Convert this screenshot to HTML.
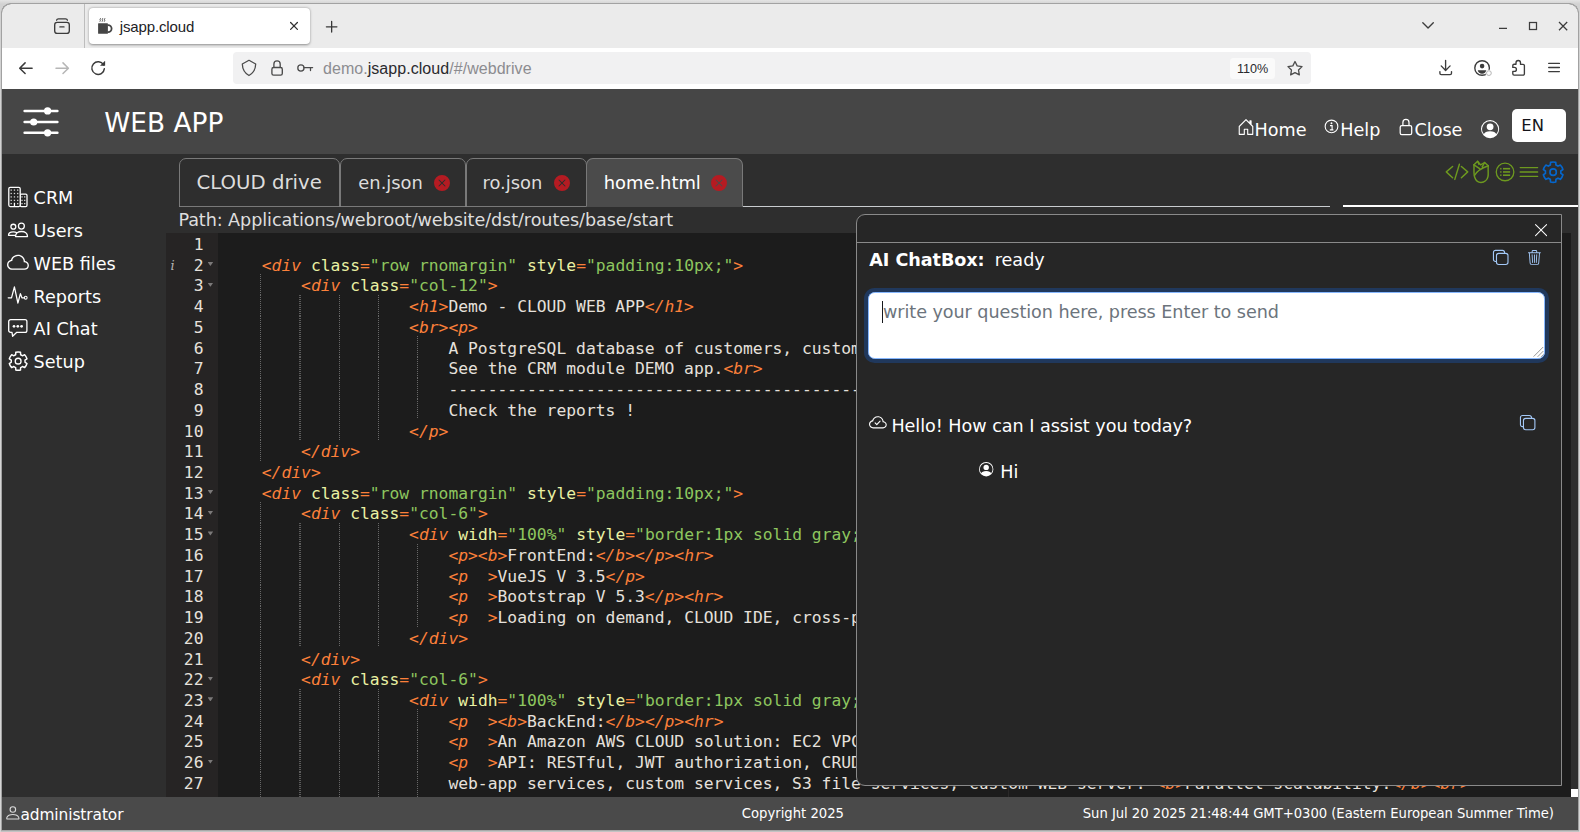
<!DOCTYPE html>
<html lang="en">
<head>
<meta charset="utf-8">
<title>jsapp.cloud</title>
<style>
*{box-sizing:border-box;margin:0;padding:0}
html,body{width:1580px;height:832px;overflow:hidden}
body{background:linear-gradient(180deg,#e4e4e4 0,#d2d2d2 4px,#d6d6d6 100%);font-family:"DejaVu Sans","Liberation Sans",sans-serif;position:relative}
.abs{position:absolute}
svg{display:block;overflow:visible}
#win{position:absolute;left:1px;top:3px;width:1578px;height:827px;border:1px solid #a2a2a2;border-bottom:0;border-radius:10px 10px 0 0;overflow:hidden;background:#2e2e2e}
/* everything inside #win is positioned in page coordinates via #pg wrapper */
#pg{position:absolute;left:-2px;top:-4px;width:1580px;height:832px}
/* ---------- browser chrome ---------- */
#titlebar{left:2px;top:4px;width:1576px;height:44px;background:#ebebeb}
#navbar{left:2px;top:48px;width:1576px;height:40.7px;background:#fff}
#tab{left:89px;top:8px;width:221px;height:35.5px;background:#fff;border-radius:4px;box-shadow:0 .5px 2.5px rgba(0,0,0,.4)}
.chrome-t{font-family:"DejaVu Sans","Liberation Sans",sans-serif;color:#15141a;white-space:pre}
#urlbar{left:233px;top:52px;width:1077.8px;height:31.8px;background:#f1f1f2;border-radius:4px}
/* ---------- app ---------- */
#hdr{left:2px;top:88.7px;width:1576px;height:65.2px;background:#464646}
#ftr{left:2px;top:797px;width:1576px;height:33px;background:#4a4a4a}
.t{position:absolute;white-space:pre;color:#fff;line-height:1}
.side{font-size:17.6px;color:#fff}
/* tabs */
.tb{position:absolute;top:158px;height:48.5px;border:1px solid #797979;border-radius:7px 7px 0 0;background:#2e2e2e}
.tb.act{background:#4b4b4b;border-bottom-color:#4b4b4b}
.tbt{font-size:19.8px;color:#dcdcdc}
/* editor */
#ed{left:166px;top:233px;width:1405px;height:564px;background:#1c1c1c;overflow:hidden}
#gut{left:0;top:0;width:52px;height:564px;background:#262424}
.ln,.cl{position:absolute;left:0;height:20.73px;line-height:20.73px;font-family:"DejaVu Sans Mono","Liberation Mono",monospace;font-size:16.32px;white-space:pre}
.ln{width:37.5px;text-align:right;color:#e6e1dc}
.cl{left:56.5px;color:#e6e1dc}
.cl i{color:#fc803a;font-style:italic}
.cl u{color:#fc803a;text-decoration:none}
.cl b{color:#eaf1a3;font-weight:normal}
.cl s{color:#8ec65f;text-decoration:none}
.fold{position:absolute;left:41.6px;width:5.6px;height:4.1px;background:#7b7979;clip-path:polygon(0 0,100% 0,50% 100%)}
.g{position:absolute;width:1px;background-image:linear-gradient(#686868 50%,transparent 50%);background-size:1px 2px}
.g2{width:2px;background-image:linear-gradient(#5c5c5c 50%,transparent 50%)}
/* chat panel */
#chat{left:856px;top:214px;width:706px;height:572px;background:#262626;border:1px solid #8a8a8a;border-radius:9px 0 0 9px}
</style>
</head>
<body>
<div class="abs" style="left:1px;top:830px;width:1578px;height:2px;background:linear-gradient(#9c9c9c,#d0d0d0)"></div>
<div id="win"><div id="pg">
<div class="abs" id="titlebar"></div>
<div class="abs" id="navbar"></div>
<div class="abs" style="left:84px;top:4px;width:1px;height:44px;background:#bdbdbd"></div>
<div class="abs" id="tab"></div>
<div class="t" style="left:119.70px;top:18px;font-size:15px;line-height:17px;color:#222226;font-family:'Liberation Sans',sans-serif;letter-spacing:-0.12px;">jsapp.cloud</div>
<div class="abs" id="urlbar"></div>
<div class="abs" style="left:1229.6px;top:57.7px;width:45.9px;height:21.4px;background:#fafafa;border-radius:3.5px"></div>
<div class="t" style="left:1237.00px;top:62px;font-size:12.6px;line-height:14px;color:#2a2a2e;font-family:'Liberation Sans',sans-serif;">110%</div>
<div class="t" style="left:323.00px;top:60px;font-size:16px;line-height:17px;color:#8c8c90;font-family:'Liberation Sans',sans-serif;letter-spacing:0.05px;"><span style="color:#8c8c90">demo.</span><span style="color:#2a2a2e">jsapp.cloud</span><span style="color:#8c8c90">/#/webdrive</span></div>
<svg class="abs" style="left:0;top:0" width="1580" height="90" viewBox="0 0 1580 90"><g fill="none" stroke="#3c3c3c" stroke-width="1.35" stroke-linecap="round" stroke-linejoin="round"><rect x="54.7" y="22.4" width="14.6" height="10.9" rx="2.4"/><path d="M56.6 20.2 q0.3 -1.3 1.8 -1.3 h7.2 q1.5 0 1.8 1.3"/><path d="M59.9 26.9 h4.1"/></g><g><rect x="98.1" y="23.2" width="9.8" height="10.6" rx="0.6" fill="#454545"/><path d="M107.6 25.1 h0.5 a3.5 3.5 0 0 1 0 7 h-0.5" fill="none" stroke="#454545" stroke-width="1.8"/><path d="M100.7 18.2 q-1.2 1 -0.5 1.8 q0.6 0.8 -0.4 1.7 M102.9 18.2 q-1.2 1 -0.5 1.8 q0.6 0.8 -0.4 1.7 M105.1 18.2 q-1.2 1 -0.5 1.8 q0.6 0.8 -0.4 1.7" stroke="#5c5c5c" stroke-width="1" fill="none"/></g><path d="M290.6 22.55 l6.8 6.8 M297.4 22.55 l-6.8 6.8" stroke="#333" stroke-width="1.3" stroke-linecap="round" fill="none"/><path d="M326.4 26.8 h10.5 M331.65 21.5 v10.6" stroke="#383838" stroke-width="1.3" stroke-linecap="round" fill="none"/><path d="M1422.8 22.8 l5.25 5.3 l5.25 -5.3" stroke="#3c3c3c" stroke-width="1.35" stroke-linecap="round" stroke-linejoin="round" fill="none"/><path d="M1499 28.4 h8" stroke="#3c3c3c" stroke-width="1.25" fill="none"/><rect x="1529.5" y="22.5" width="7" height="7" stroke="#3c3c3c" stroke-width="1.25" fill="none"/><path d="M1559 22 l8.2 8.2 M1567.2 22 l-8.2 8.2" stroke="#3c3c3c" stroke-width="1.25" fill="none"/><path d="M32.1 68.2 H19.8 M25.1 62.9 L19.7 68.2 L25.1 73.5" stroke="#3a3a3a" stroke-width="1.5" stroke-linecap="round" stroke-linejoin="round" fill="none"/><path d="M56 68.2 H68.3 M63 62.9 L68.4 68.2 L63 73.5" stroke="#b6b6b6" stroke-width="1.5" stroke-linecap="round" stroke-linejoin="round" fill="none"/><path d="M104.38 68.65 A6.3 6.3 0 1 1 103.56 64.95" stroke="#3a3a3a" stroke-width="1.45" stroke-linecap="round" fill="none"/><path d="M105.1 60.7 V65.8 H100 Z" fill="#3a3a3a"/><path d="M249 60.3 L255.7 64 C255.5 70 253.2 73.2 249 75.5 C244.8 73.2 242.5 70 242.3 64 Z" stroke="#4c4c4c" stroke-width="1.3" stroke-linejoin="round" fill="none"/><rect x="271.9" y="67.5" width="10.4" height="7.6" rx="1.7" stroke="#4c4c4c" stroke-width="1.35" fill="none"/><path d="M273.9 67.4 V64 a3.15 3.15 0 0 1 6.3 0 V67.4" stroke="#4c4c4c" stroke-width="1.35" fill="none"/><circle cx="300.9" cy="68" r="3.1" stroke="#4c4c4c" stroke-width="1.3" fill="none"/><path d="M304 67.6 H312.6 M310.5 67.6 V70.6" stroke="#4c4c4c" stroke-width="1.3" stroke-linecap="round" fill="none"/><polygon points="1295.00,61.50 1297.17,65.91 1302.04,66.61 1298.52,70.04 1299.35,74.89 1295.00,72.60 1290.65,74.89 1291.48,70.04 1287.96,66.61 1292.83,65.91" stroke="#4c4c4c" stroke-width="1.3" stroke-linejoin="round" fill="none"/><path d="M1445.6 60.3 V70.4 M1441.2 65.9 L1445.6 70.5 L1450.1 65.9 M1439.9 71.6 V73.2 a1.4 1.4 0 0 0 1.4 1.4 H1450.1 a1.4 1.4 0 0 0 1.4 -1.4 V71.6" stroke="#3c3c3c" stroke-width="1.35" stroke-linecap="round" stroke-linejoin="round" fill="none"/><circle cx="1482.1" cy="68" r="7.3" stroke="#3c3c3c" stroke-width="1.4" fill="none"/><circle cx="1482.1" cy="66.1" r="2.3" fill="#3c3c3c"/><path d="M1477.7 70.3 H1486.5 C1486 72.6 1484.3 73.8 1482.1 73.8 C1479.9 73.8 1478.2 72.6 1477.7 70.3 Z" fill="#3c3c3c"/><circle cx="1488.9" cy="73.1" r="3.4" fill="#fff"/><circle cx="1488.9" cy="73.1" r="2.4" fill="#fff" stroke="#b4b4b4" stroke-width="1"/><path d="M1512.8 65.6 a1.3 1.3 0 0 1 1.3 -1.3 H1516 V62.7 a2.25 2.25 0 0 1 4.5 0 V64.3 H1523.1 a1.3 1.3 0 0 1 1.3 1.3 V73.8 a1.3 1.3 0 0 1 -1.3 1.3 H1514.1 a1.3 1.3 0 0 1 -1.3 -1.3 V71.4 H1514.4 a2 2 0 0 0 0 -4 H1512.8 Z" stroke="#3c3c3c" stroke-width="1.35" stroke-linejoin="round" fill="none"/><path d="M1548.7 63.4 H1559.4 M1548.7 67.5 H1559.4 M1548.7 71.6 H1559.4" stroke="#3c3c3c" stroke-width="1.3" stroke-linecap="round" fill="none"/></svg>
<div class="abs" id="hdr"></div>
<svg class="abs" style="left:20px;top:104px" width="44" height="36" viewBox="20 104 44 36"><g stroke="#fff" stroke-width="2.5" stroke-linecap="round"><path d="M24.6 110.9 H57.4 M24.6 122 H57.4 M24.6 132.8 H57.4"/></g><circle cx="47.6" cy="110.9" r="3.6" fill="#fff"/><circle cx="33.7" cy="122" r="3.6" fill="#fff"/><circle cx="47.6" cy="132.8" r="3.6" fill="#fff"/></svg>
<div class="t" style="left:104.20px;top:108px;font-size:26.4px;line-height:30px;color:#fff;">WEB APP</div>
<svg class="abs" style="left:1237.45px;top:117.70px" width="18.00" height="18.00" viewBox="0 0 16 16" preserveAspectRatio="none" fill="#fff"><path d="M8.354 1.146a.5.5 0 0 0-.708 0l-6 6A.5.5 0 0 0 1.5 7.5v7a.5.5 0 0 0 .5.5h4.5a.5.5 0 0 0 .5-.5v-4h2v4a.5.5 0 0 0 .5.5H14a.5.5 0 0 0 .5-.5v-7a.5.5 0 0 0-.146-.354L13 5.793V2.5a.5.5 0 0 0-.5-.5h-1a.5.5 0 0 0-.5.5v1.293zM2.5 14V7.707l5.5-5.5 5.5 5.5V14H10v-4a.5.5 0 0 0-.5-.5h-3a.5.5 0 0 0-.5.5v4z"/></svg>
<div class="t" style="left:1254.60px;top:120px;font-size:17.6px;line-height:20px;color:#fff;">Home</div>
<svg class="abs" style="left:1322px;top:117px" width="20" height="20" viewBox="1322 117 20 20"><circle cx="1331.5" cy="126.45" r="6.35" fill="none" stroke="#fff" stroke-width="1.1"/><circle cx="1331.5" cy="123.3" r="0.95" fill="#fff"/><path d="M1330 125.6 H1332.1 V129.8 M1329.8 129.9 H1333.4" fill="none" stroke="#fff" stroke-width="1.15"/></svg>
<div class="t" style="left:1340.30px;top:120px;font-size:17.6px;line-height:20px;color:#fff;">Help</div>
<svg class="abs" style="left:1396px;top:116px" width="20" height="22" viewBox="1396 116 20 22"><rect x="1400.2" y="125.6" width="11.5" height="8.9" rx="1.6" fill="none" stroke="#fff" stroke-width="1.25"/><path d="M1402.9 125.6 V122.4 a3.05 3.05 0 0 1 6.1 0 V125.6" fill="none" stroke="#fff" stroke-width="1.25"/></svg>
<div class="t" style="left:1414.50px;top:120px;font-size:17.6px;line-height:20px;color:#fff;">Close</div>
<svg class="abs" style="left:1480.90px;top:119.90px" width="18.20" height="18.20" viewBox="0 0 16 16" preserveAspectRatio="none" fill="#fff"><path d="M11 6a3 3 0 1 1-6 0 3 3 0 0 1 6 0"/><path fill-rule="evenodd" d="M0 8a8 8 0 1 1 16 0A8 8 0 0 1 0 8m8-7a7 7 0 0 0-5.468 11.370C3.242 11.226 4.805 10 8 10s4.757 1.225 5.468 2.370A7 7 0 0 0 8 1"/></svg>
<div class="abs" style="left:1511.8px;top:108.8px;width:54.3px;height:33.2px;background:#fff;border-radius:5px"></div>
<div class="t" style="left:1521.30px;top:116px;font-size:16.4px;line-height:19px;color:#15141a;">EN</div>
<div class="t" style="left:33.60px;top:188px;font-size:17.6px;line-height:20px;color:#fff;">CRM</div>
<div class="t" style="left:33.60px;top:221px;font-size:17.6px;line-height:20px;color:#fff;">Users</div>
<div class="t" style="left:33.60px;top:254px;font-size:17.6px;line-height:20px;color:#fff;">WEB files</div>
<div class="t" style="left:33.60px;top:287px;font-size:17.6px;line-height:20px;color:#fff;">Reports</div>
<div class="t" style="left:33.60px;top:319px;font-size:17.6px;line-height:20px;color:#fff;">AI Chat</div>
<div class="t" style="left:33.60px;top:352px;font-size:17.6px;line-height:20px;color:#fff;">Setup</div>
<svg class="abs" style="left:4px;top:182px" width="30" height="30" viewBox="4 182 30 30"><rect x="20.2" y="194.2" width="6.8" height="12.4" rx="1.3" fill="#222" stroke="#fff" stroke-width="1.3"/><rect x="8.8" y="187.3" width="11.4" height="19.3" rx="1.5" fill="#222" stroke="#fff" stroke-width="1.3"/><g fill="#d8d8d8"><rect x="10.55" y="189.45" width="1.3" height="1.3"/><rect x="10.55" y="192.85" width="1.3" height="1.3"/><rect x="10.55" y="196.25" width="1.3" height="1.3"/><rect x="10.55" y="199.75" width="1.3" height="1.3"/><rect x="10.55" y="202.95" width="1.3" height="1.3"/><rect x="13.80" y="189.45" width="1.3" height="1.3"/><rect x="13.80" y="192.85" width="1.3" height="1.3"/><rect x="13.80" y="196.25" width="1.3" height="1.3"/><rect x="13.80" y="199.75" width="1.3" height="1.3"/><rect x="17.05" y="189.45" width="1.3" height="1.3"/><rect x="17.05" y="192.85" width="1.3" height="1.3"/><rect x="17.05" y="196.25" width="1.3" height="1.3"/><rect x="17.05" y="199.75" width="1.3" height="1.3"/><rect x="17.05" y="202.95" width="1.3" height="1.3"/><rect x="21.35" y="196.25" width="1.3" height="1.3"/><rect x="21.35" y="199.75" width="1.3" height="1.3"/><rect x="21.35" y="202.95" width="1.3" height="1.3"/><rect x="24.05" y="196.25" width="1.3" height="1.3"/><rect x="24.05" y="199.75" width="1.3" height="1.3"/><rect x="24.05" y="202.95" width="1.3" height="1.3"/></g><path d="M14.45 202.8 V206.6" stroke="#fff" stroke-width="1.3"/></svg>
<svg class="abs" style="left:4px;top:216px" width="30" height="28" viewBox="4 216 30 28"><g fill="none" stroke="#fff" stroke-width="1.3" stroke-linejoin="round" stroke-linecap="round"><circle cx="13.35" cy="226.7" r="2.45"/><path d="M14.9 235.3 H8.5 C8.5 233 10.6 231.9 13.3 231.9 C14.7 231.9 15.9 232.2 16.8 232.8"/><circle cx="21.4" cy="226.1" r="2.95" fill="#2a2a2a"/><path d="M15.5 236.6 H27.5 C27.5 233.4 24.8 231.5 21.5 231.5 C18.2 231.5 15.5 233.4 15.5 236.6 Z" fill="#2a2a2a"/></g></svg>
<svg class="abs" style="left:6.92px;top:251.91px" width="21.95" height="21.95" viewBox="0 0 16 16" preserveAspectRatio="none" fill="#fff"><path d="M4.406 3.342A5.53 5.53 0 0 1 8 2c2.69 0 4.923 2 5.166 4.579C14.758 6.804 16 8.137 16 9.773 16 11.569 14.502 13 12.687 13H3.781C1.708 13 0 11.366 0 9.318c0-1.763 1.266-3.223 2.942-3.593.143-.863.698-1.723 1.464-2.383m.653.757c-.757.653-1.153 1.44-1.153 2.056v.448l-.445.049C2.064 6.805 1 7.952 1 9.318 1 10.785 2.23 12 3.781 12h8.906C13.98 12 15 10.988 15 9.773c0-1.216-1.02-2.228-2.313-2.228h-.5v-.5C12.188 4.825 10.328 3 8 3a4.53 4.53 0 0 0-2.941 1.1z"/></svg>
<svg class="abs" style="left:4px;top:282px" width="30" height="26" viewBox="4 282 30 26"><path d="M8.2 297.8 H11.5 L14.4 286.8 L17.9 303 L20.4 293.6 L21.9 297.8 H24.2" fill="none" stroke="#fff" stroke-width="1.25" stroke-linecap="round" stroke-linejoin="round"/><circle cx="25.7" cy="297.7" r="1.4" fill="none" stroke="#fff" stroke-width="1.05"/></svg>
<svg class="abs" style="left:4px;top:315px" width="30" height="26" viewBox="4 315 30 26"><path d="M10.6 319.7 H25 a1.9 1.9 0 0 1 1.9 1.9 V330.4 a1.9 1.9 0 0 1 -1.9 1.9 H16.8 L12.6 336.2 L12 332.3 H10.6 a1.9 1.9 0 0 1 -1.9 -1.9 V321.6 a1.9 1.9 0 0 1 1.9 -1.9 Z" fill="none" stroke="#fff" stroke-width="1.3" stroke-linejoin="round"/><circle cx="14" cy="326.3" r="1.35" fill="#fff"/><circle cx="17.8" cy="326.3" r="1.35" fill="#fff"/><circle cx="21.6" cy="326.3" r="1.35" fill="#fff"/></svg>
<svg class="abs" style="left:5.65px;top:348.75px" width="24.30" height="24.30" viewBox="5.65 348.75 24.30 24.30"><path d="M15.33 354.46 L15.43 352.06 A9.15 9.15 0 0 1 20.17 352.06 L20.27 354.46 A6.90 6.90 0 0 1 22.14 355.54 L24.27 354.43 A9.15 9.15 0 0 1 26.64 358.53 L24.62 359.82 A6.90 6.90 0 0 1 24.62 361.98 L26.64 363.27 A9.15 9.15 0 0 1 24.27 367.37 L22.14 366.26 A6.90 6.90 0 0 1 20.27 367.34 L20.17 369.74 A9.15 9.15 0 0 1 15.43 369.74 L15.33 367.34 A6.90 6.90 0 0 1 13.46 366.26 L11.33 367.37 A9.15 9.15 0 0 1 8.96 363.27 L10.98 361.98 A6.90 6.90 0 0 1 10.98 359.82 L8.96 358.53 A9.15 9.15 0 0 1 11.33 354.43 L13.46 355.54 A6.90 6.90 0 0 1 15.33 354.46 Z" fill="#2a2a2a" stroke="#fff" stroke-width="1.45" stroke-linejoin="round"/><circle cx="17.8" cy="360.9" r="2.9" fill="none" stroke="#fff" stroke-width="1.35"/></svg>
<div class="abs" style="left:179px;top:206px;width:1151px;height:1px;background:#c9cccf"></div>
<div class="abs" style="left:1343px;top:204.9px;width:235px;height:2.2px;background:#fff"></div>
<div class="tb" style="left:179px;width:161.1px"></div>
<div class="t" style="left:196.60px;top:171px;font-size:19.7px;line-height:23px;color:#dddddd;">CLOUD drive</div>
<div class="tb" style="left:339.5px;width:126.9px"></div>
<div class="t" style="left:358.30px;top:172px;font-size:17.9px;line-height:21px;color:#dddddd;">en.json</div>
<svg class="abs" style="left:433.60px;top:174.90px" width="16.00" height="16.00" viewBox="0 0 16 16" preserveAspectRatio="none" fill="#b51b22"><path d="M16 8A8 8 0 1 1 0 8a8 8 0 0 1 16 0M5.354 4.646a.5.5 0 1 0-.708.708L7.293 8l-2.647 2.646a.5.5 0 0 0 .708.708L8 8.707l2.646 2.647a.5.5 0 0 0 .708-.708L8.707 8l2.647-2.646a.5.5 0 0 0-.708-.708L8 7.293z"/></svg>
<div class="tb" style="left:465.8px;width:120.8px"></div>
<div class="t" style="left:482.50px;top:172px;font-size:17.9px;line-height:21px;color:#dddddd;">ro.json</div>
<svg class="abs" style="left:553.80px;top:174.90px" width="16.00" height="16.00" viewBox="0 0 16 16" preserveAspectRatio="none" fill="#b51b22"><path d="M16 8A8 8 0 1 1 0 8a8 8 0 0 1 16 0M5.354 4.646a.5.5 0 1 0-.708.708L7.293 8l-2.647 2.646a.5.5 0 0 0 .708.708L8 8.707l2.646 2.647a.5.5 0 0 0 .708-.708L8.707 8l2.647-2.646a.5.5 0 0 0-.708-.708L8 7.293z"/></svg>
<div class="tb act" style="left:586px;width:156.9px"></div>
<div class="t" style="left:603.70px;top:172px;font-size:17.9px;line-height:21px;color:#fff;">home.html</div>
<svg class="abs" style="left:710.70px;top:174.90px" width="16.00" height="16.00" viewBox="0 0 16 16" preserveAspectRatio="none" fill="#b51b22"><path d="M16 8A8 8 0 1 1 0 8a8 8 0 0 1 16 0M5.354 4.646a.5.5 0 1 0-.708.708L7.293 8l-2.647 2.646a.5.5 0 0 0 .708.708L8 8.707l2.646 2.647a.5.5 0 0 0 .708-.708L8.707 8l2.647-2.646a.5.5 0 0 0-.708-.708L8 7.293z"/></svg>
<div class="t" style="left:178.40px;top:210px;font-size:17.6px;line-height:20px;color:#dedede;letter-spacing:-0.075px;">Path: Applications/webroot/website/dst/routes/base/start</div>
<svg class="abs" style="left:1440px;top:156px" width="130" height="32" viewBox="1440 156 130 32"><g fill="none" stroke="#6d991f" stroke-width="1.45" stroke-linecap="round" stroke-linejoin="round"><path d="M1452.6 166.5 L1446.3 171.9 L1452.6 177.7 M1459.4 164.3 L1454.8 179.4 M1461.4 166.5 L1467.7 171.9 L1461.4 177.7"/><path d="M1474 164.8 L1477.6 161.3 L1480.6 164.9 L1484.6 162.5 L1488.3 165.7"/><path d="M1474 164.8 C1474.1 170 1473.6 174 1474.6 177 C1475.8 180.8 1478 182.5 1481 182.5 C1484.4 182.5 1487.3 180 1488 176.5 C1488.6 173.5 1487.8 169.5 1488.3 165.7"/><path d="M1488.3 165.7 C1483 167.5 1477 170.5 1474.5 175.5 M1474 164.8 L1479.6 168.7 M1477.6 161.3 L1479 164.4 M1484.6 162.5 L1482.2 166.9"/><circle cx="1505.05" cy="171.95" r="8.8" stroke-width="1.3"/></g><g fill="#6d991f"><rect x="1503" y="167.90" width="7.1" height="1.6"/><rect x="1500" y="167.90" width="1.6" height="1.6" opacity=".8"/><rect x="1503" y="171.15" width="7.1" height="1.6"/><rect x="1500" y="171.15" width="1.6" height="1.6" opacity=".8"/><rect x="1503" y="174.40" width="7.1" height="1.6"/><rect x="1500" y="174.40" width="1.6" height="1.6" opacity=".8"/></g><path d="M1520.2 167.6 H1537.6 M1520.2 172 H1537.6 M1520.2 176.4 H1537.6" stroke="#6d991f" stroke-width="1.4" stroke-linecap="round" fill="none"/></svg>
<svg class="abs" style="left:1539.85px;top:158.80px" width="26.30" height="26.30" viewBox="1539.85 158.80 26.30 26.30"><path d="M1550.22 164.71 L1550.37 162.15 A10.15 10.15 0 0 1 1555.63 162.15 L1555.78 164.71 A7.75 7.75 0 0 1 1557.88 165.93 L1560.18 164.77 A10.15 10.15 0 0 1 1562.80 169.32 L1560.65 170.74 A7.75 7.75 0 0 1 1560.65 173.16 L1562.80 174.58 A10.15 10.15 0 0 1 1560.18 179.13 L1557.88 177.97 A7.75 7.75 0 0 1 1555.78 179.19 L1555.63 181.75 A10.15 10.15 0 0 1 1550.37 181.75 L1550.22 179.19 A7.75 7.75 0 0 1 1548.12 177.97 L1545.82 179.13 A10.15 10.15 0 0 1 1543.20 174.58 L1545.35 173.16 A7.75 7.75 0 0 1 1545.35 170.74 L1543.20 169.32 A10.15 10.15 0 0 1 1545.82 164.77 L1548.12 165.93 A7.75 7.75 0 0 1 1550.22 164.71 Z" fill="none" stroke="#0566cc" stroke-width="1.65" stroke-linejoin="round"/><circle cx="1553.0" cy="171.95" r="3.2" fill="none" stroke="#0566cc" stroke-width="1.65"/></svg>
<div class="abs" id="ed">
<div class="abs" id="gut"></div>
<div class="ln" style="top:1.95px">1</div>
<div class="ln" style="top:22.68px">2</div>
<div class="fold" style="top:28.98px"></div>
<div class="cl" style="top:22.68px">    <i>&lt;div</i> <b>class</b><u>=</u><s>&quot;row rnomargin&quot;</s> <b>style</b><u>=</u><s>&quot;padding:10px;&quot;</s><u>&gt;</u></div>
<div class="ln" style="top:43.41px">3</div>
<div class="fold" style="top:49.71px"></div>
<div class="cl" style="top:43.41px">        <i>&lt;div</i> <b>class</b><u>=</u><s>&quot;col-12&quot;</s><u>&gt;</u></div>
<div class="g" style="left:94px;top:41.16px;height:20.73px"></div>
<div class="ln" style="top:64.14px">4</div>
<div class="cl" style="top:64.14px">                   <i>&lt;h1&gt;</i>Demo - CLOUD WEB APP<i>&lt;/h1&gt;</i></div>
<div class="g" style="left:94px;top:61.89px;height:20.73px"></div>
<div class="g g2" style="left:133px;top:61.89px;height:20.73px"></div>
<div class="g" style="left:173px;top:61.89px;height:20.73px"></div>
<div class="g" style="left:212px;top:61.89px;height:20.73px"></div>
<div class="ln" style="top:84.87px">5</div>
<div class="cl" style="top:84.87px">                   <i>&lt;br&gt;</i><i>&lt;p&gt;</i></div>
<div class="g" style="left:94px;top:82.62px;height:20.73px"></div>
<div class="g g2" style="left:133px;top:82.62px;height:20.73px"></div>
<div class="g" style="left:173px;top:82.62px;height:20.73px"></div>
<div class="g" style="left:212px;top:82.62px;height:20.73px"></div>
<div class="ln" style="top:105.60px">6</div>
<div class="cl" style="top:105.60px">                       A PostgreSQL database of customers, customer contacts, products and orders.</div>
<div class="g" style="left:94px;top:103.35px;height:20.73px"></div>
<div class="g g2" style="left:133px;top:103.35px;height:20.73px"></div>
<div class="g" style="left:173px;top:103.35px;height:20.73px"></div>
<div class="g" style="left:212px;top:103.35px;height:20.73px"></div>
<div class="g" style="left:251px;top:103.35px;height:20.73px"></div>
<div class="ln" style="top:126.33px">7</div>
<div class="cl" style="top:126.33px">                       See the CRM module DEMO app.<i>&lt;br&gt;</i></div>
<div class="g" style="left:94px;top:124.08px;height:20.73px"></div>
<div class="g g2" style="left:133px;top:124.08px;height:20.73px"></div>
<div class="g" style="left:173px;top:124.08px;height:20.73px"></div>
<div class="g" style="left:212px;top:124.08px;height:20.73px"></div>
<div class="g" style="left:251px;top:124.08px;height:20.73px"></div>
<div class="ln" style="top:147.06px">8</div>
<div class="cl" style="top:147.06px">                       ----------------------------------------------------------------------</div>
<div class="g" style="left:94px;top:144.81px;height:20.73px"></div>
<div class="g g2" style="left:133px;top:144.81px;height:20.73px"></div>
<div class="g" style="left:173px;top:144.81px;height:20.73px"></div>
<div class="g" style="left:212px;top:144.81px;height:20.73px"></div>
<div class="g" style="left:251px;top:144.81px;height:20.73px"></div>
<div class="ln" style="top:167.79px">9</div>
<div class="cl" style="top:167.79px">                       Check the reports !</div>
<div class="g" style="left:94px;top:165.54px;height:20.73px"></div>
<div class="g g2" style="left:133px;top:165.54px;height:20.73px"></div>
<div class="g" style="left:173px;top:165.54px;height:20.73px"></div>
<div class="g" style="left:212px;top:165.54px;height:20.73px"></div>
<div class="g" style="left:251px;top:165.54px;height:20.73px"></div>
<div class="ln" style="top:188.52px">10</div>
<div class="cl" style="top:188.52px">                   <i>&lt;/p&gt;</i></div>
<div class="g" style="left:94px;top:186.27px;height:20.73px"></div>
<div class="g g2" style="left:133px;top:186.27px;height:20.73px"></div>
<div class="g" style="left:173px;top:186.27px;height:20.73px"></div>
<div class="g" style="left:212px;top:186.27px;height:20.73px"></div>
<div class="ln" style="top:209.25px">11</div>
<div class="cl" style="top:209.25px">        <i>&lt;/div&gt;</i></div>
<div class="g" style="left:94px;top:207.00px;height:20.73px"></div>
<div class="ln" style="top:229.98px">12</div>
<div class="cl" style="top:229.98px">    <i>&lt;/div&gt;</i></div>
<div class="ln" style="top:250.71px">13</div>
<div class="fold" style="top:257.01px"></div>
<div class="cl" style="top:250.71px">    <i>&lt;div</i> <b>class</b><u>=</u><s>&quot;row rnomargin&quot;</s> <b>style</b><u>=</u><s>&quot;padding:10px;&quot;</s><u>&gt;</u></div>
<div class="ln" style="top:271.44px">14</div>
<div class="fold" style="top:277.74px"></div>
<div class="cl" style="top:271.44px">        <i>&lt;div</i> <b>class</b><u>=</u><s>&quot;col-6&quot;</s><u>&gt;</u></div>
<div class="g" style="left:94px;top:269.19px;height:20.73px"></div>
<div class="ln" style="top:292.17px">15</div>
<div class="fold" style="top:298.47px"></div>
<div class="cl" style="top:292.17px">                   <i>&lt;div</i> <b>widh</b><u>=</u><s>&quot;100%&quot;</s> <b>style</b><u>=</u><s>&quot;border:1px solid gray;padding:10px;min-height:300px;&quot;</s><u>&gt;</u></div>
<div class="g" style="left:94px;top:289.92px;height:20.73px"></div>
<div class="g g2" style="left:133px;top:289.92px;height:20.73px"></div>
<div class="g" style="left:173px;top:289.92px;height:20.73px"></div>
<div class="g" style="left:212px;top:289.92px;height:20.73px"></div>
<div class="ln" style="top:312.90px">16</div>
<div class="cl" style="top:312.90px">                       <i>&lt;p&gt;</i><i>&lt;b&gt;</i>FrontEnd:<i>&lt;/b&gt;</i><i>&lt;/p&gt;</i><i>&lt;hr&gt;</i></div>
<div class="g" style="left:94px;top:310.65px;height:20.73px"></div>
<div class="g g2" style="left:133px;top:310.65px;height:20.73px"></div>
<div class="g" style="left:173px;top:310.65px;height:20.73px"></div>
<div class="g" style="left:212px;top:310.65px;height:20.73px"></div>
<div class="g" style="left:251px;top:310.65px;height:20.73px"></div>
<div class="ln" style="top:333.63px">17</div>
<div class="cl" style="top:333.63px">                       <i>&lt;p</i>  <u>&gt;</u>VueJS V 3.5<i>&lt;/p&gt;</i></div>
<div class="g" style="left:94px;top:331.38px;height:20.73px"></div>
<div class="g g2" style="left:133px;top:331.38px;height:20.73px"></div>
<div class="g" style="left:173px;top:331.38px;height:20.73px"></div>
<div class="g" style="left:212px;top:331.38px;height:20.73px"></div>
<div class="g" style="left:251px;top:331.38px;height:20.73px"></div>
<div class="ln" style="top:354.36px">18</div>
<div class="cl" style="top:354.36px">                       <i>&lt;p</i>  <u>&gt;</u>Bootstrap V 5.3<i>&lt;/p&gt;</i><i>&lt;hr&gt;</i></div>
<div class="g" style="left:94px;top:352.11px;height:20.73px"></div>
<div class="g g2" style="left:133px;top:352.11px;height:20.73px"></div>
<div class="g" style="left:173px;top:352.11px;height:20.73px"></div>
<div class="g" style="left:212px;top:352.11px;height:20.73px"></div>
<div class="g" style="left:251px;top:352.11px;height:20.73px"></div>
<div class="ln" style="top:375.09px">19</div>
<div class="cl" style="top:375.09px">                       <i>&lt;p</i>  <u>&gt;</u>Loading on demand, CLOUD IDE, cross-platform, responsive<i>&lt;/p&gt;</i></div>
<div class="g" style="left:94px;top:372.84px;height:20.73px"></div>
<div class="g g2" style="left:133px;top:372.84px;height:20.73px"></div>
<div class="g" style="left:173px;top:372.84px;height:20.73px"></div>
<div class="g" style="left:212px;top:372.84px;height:20.73px"></div>
<div class="g" style="left:251px;top:372.84px;height:20.73px"></div>
<div class="ln" style="top:395.82px">20</div>
<div class="cl" style="top:395.82px">                   <i>&lt;/div&gt;</i></div>
<div class="g" style="left:94px;top:393.57px;height:20.73px"></div>
<div class="g g2" style="left:133px;top:393.57px;height:20.73px"></div>
<div class="g" style="left:173px;top:393.57px;height:20.73px"></div>
<div class="g" style="left:212px;top:393.57px;height:20.73px"></div>
<div class="ln" style="top:416.55px">21</div>
<div class="cl" style="top:416.55px">        <i>&lt;/div&gt;</i></div>
<div class="g" style="left:94px;top:414.30px;height:20.73px"></div>
<div class="ln" style="top:437.28px">22</div>
<div class="fold" style="top:443.58px"></div>
<div class="cl" style="top:437.28px">        <i>&lt;div</i> <b>class</b><u>=</u><s>&quot;col-6&quot;</s><u>&gt;</u></div>
<div class="g" style="left:94px;top:435.03px;height:20.73px"></div>
<div class="ln" style="top:458.01px">23</div>
<div class="fold" style="top:464.31px"></div>
<div class="cl" style="top:458.01px">                   <i>&lt;div</i> <b>widh</b><u>=</u><s>&quot;100%&quot;</s> <b>style</b><u>=</u><s>&quot;border:1px solid gray;padding:10px;min-height:300px;&quot;</s><u>&gt;</u></div>
<div class="g" style="left:94px;top:455.76px;height:20.73px"></div>
<div class="g g2" style="left:133px;top:455.76px;height:20.73px"></div>
<div class="g" style="left:173px;top:455.76px;height:20.73px"></div>
<div class="g" style="left:212px;top:455.76px;height:20.73px"></div>
<div class="ln" style="top:478.74px">24</div>
<div class="cl" style="top:478.74px">                       <i>&lt;p</i>  <u>&gt;</u><i>&lt;b&gt;</i>BackEnd:<i>&lt;/b&gt;</i><i>&lt;/p&gt;</i><i>&lt;hr&gt;</i></div>
<div class="g" style="left:94px;top:476.49px;height:20.73px"></div>
<div class="g g2" style="left:133px;top:476.49px;height:20.73px"></div>
<div class="g" style="left:173px;top:476.49px;height:20.73px"></div>
<div class="g" style="left:212px;top:476.49px;height:20.73px"></div>
<div class="g" style="left:251px;top:476.49px;height:20.73px"></div>
<div class="ln" style="top:499.47px">25</div>
<div class="cl" style="top:499.47px">                       <i>&lt;p</i>  <u>&gt;</u>An Amazon AWS CLOUD solution: EC2 VPC, RDS PostgreSQL, S3<i>&lt;/p&gt;</i></div>
<div class="g" style="left:94px;top:497.22px;height:20.73px"></div>
<div class="g g2" style="left:133px;top:497.22px;height:20.73px"></div>
<div class="g" style="left:173px;top:497.22px;height:20.73px"></div>
<div class="g" style="left:212px;top:497.22px;height:20.73px"></div>
<div class="g" style="left:251px;top:497.22px;height:20.73px"></div>
<div class="ln" style="top:520.20px">26</div>
<div class="fold" style="top:526.50px"></div>
<div class="cl" style="top:520.20px">                       <i>&lt;p</i>  <u>&gt;</u>API: RESTful, JWT authorization, CRUD services,</div>
<div class="g" style="left:94px;top:517.95px;height:20.73px"></div>
<div class="g g2" style="left:133px;top:517.95px;height:20.73px"></div>
<div class="g" style="left:173px;top:517.95px;height:20.73px"></div>
<div class="g" style="left:212px;top:517.95px;height:20.73px"></div>
<div class="g" style="left:251px;top:517.95px;height:20.73px"></div>
<div class="ln" style="top:540.93px">27</div>
<div class="cl" style="top:540.93px">                       web-app services, custom services, S3 file services, custom WEB server. <i>&lt;b&gt;</i>Parallel scalability.<i>&lt;/b&gt;</i><i>&lt;br&gt;</i></div>
<div class="g" style="left:94px;top:538.68px;height:20.73px"></div>
<div class="g g2" style="left:133px;top:538.68px;height:20.73px"></div>
<div class="g" style="left:173px;top:538.68px;height:20.73px"></div>
<div class="g" style="left:212px;top:538.68px;height:20.73px"></div>
<div class="g" style="left:251px;top:538.68px;height:20.73px"></div>
<div class="ln" style="top:561.66px">28</div>
<div class="g" style="left:94px;top:559.41px;height:20.73px"></div>
<div class="g g2" style="left:133px;top:559.41px;height:20.73px"></div>
<div class="g" style="left:173px;top:559.41px;height:20.73px"></div>
<div class="g" style="left:212px;top:559.41px;height:20.73px"></div>
<div class="g" style="left:251px;top:559.41px;height:20.73px"></div>
<div class="abs" style="left:4.6px;top:24.88px;font-family:'DejaVu Serif','Liberation Serif',serif;font-style:italic;font-size:13px;line-height:16px;color:#b4b4b4">i</div>
<div class="abs" style="left:842px;top:0;width:1px;height:564px;background:#2a2828"></div>
</div>
<div class="abs" id="chat"></div>
<div class="abs" style="left:857px;top:242px;width:704px;height:1px;background:#8a8a8a"></div>
<svg class="abs" style="left:1532.98px;top:221.98px" width="16.13" height="16.13" viewBox="0 0 16 16" preserveAspectRatio="none" fill="#fff"><path d="M2.146 2.854a.5.5 0 1 1 .708-.708L8 7.293l5.146-5.147a.5.5 0 0 1 .708.708L8.707 8l5.147 5.146a.5.5 0 0 1-.708.708L8 8.707l-5.146 5.147a.5.5 0 0 1-.708-.708L7.293 8z"/></svg>
<div class="t" style="left:869.30px;top:250px;font-size:17.6px;line-height:20px;color:#fff;font-weight:bold;letter-spacing:-0.06px;">AI ChatBox:</div>
<div class="t" style="left:994.70px;top:250px;font-size:17.6px;line-height:20px;color:#fff;">ready</div>
<svg class="abs" style="left:1492.0px;top:249.1px" width="17.59999999999991" height="17.099999999999994" viewBox="-1 -1 18.05 18.12" preserveAspectRatio="none"><g fill="none" stroke="#a3c8f7" stroke-width="1.15" stroke-linejoin="round"><rect x="3.6" y="3.6" width="11.8" height="11.8" rx="2.3"/><path d="M3.6 12.2 H2.6 a2.1 2.1 0 0 1 -2.1 -2.1 V2.6 a2.1 2.1 0 0 1 2.1 -2.1 H9.8 a2.1 2.1 0 0 1 2.1 2.1 V3.6"/></g></svg>
<svg class="abs" style="left:1527.28px;top:250.22px" width="14.85" height="14.85" viewBox="0 0 16 16" preserveAspectRatio="none" fill="#a3c8f7"><path d="M6.5 1h3a.5.5 0 0 1 .5.5v1H6v-1a.5.5 0 0 1 .5-.5M11 2.500v-1A1.500 1.500 0 0 0 9.500 0h-3A1.500 1.500 0 0 0 5 1.500v1H1.500a.5.5 0 0 0 0 1h.538l.853 10.660A2 2 0 0 0 4.885 16h6.230a2 2 0 0 0 1.994-1.840l.853-10.660h.538a.5.5 0 0 0 0-1zm1.958 1-.846 10.580a1 1 0 0 1-.997.920h-6.230a1 1 0 0 1-.997-.920L3.042 3.500zm-7.487 1a.5.5 0 0 1 .528.470l.5 8.500a.5.5 0 0 1-.998.060L5 5.030a.5.5 0 0 1 .470-.530Zm5.058 0a.5.5 0 0 1 .470.530l-.5 8.500a.5.5 0 1 1-.998-.060l.5-8.500a.5.5 0 0 1 .528-.470M8 4.500a.5.5 0 0 1 .5.500v8.500a.5.5 0 0 1-1 0V5a.5.5 0 0 1 .5-.500"/></svg>
<div class="abs" style="left:868px;top:292px;width:677.1px;height:67.1px;background:#fff;border:1px solid #86b7fe;border-radius:6.6px;box-shadow:0 0 0 4px #20385c"></div>
<div class="t" style="left:883.00px;top:302px;font-size:17.6px;line-height:20px;color:#6c747c;letter-spacing:-0.06px;">write your question here, press Enter to send</div>
<div class="abs" style="left:882px;top:301px;width:1px;height:22px;background:#16181c"></div>
<svg class="abs" style="left:1530px;top:344px" width="16" height="16" viewBox="1530 344 16 16"><path d="M1533.6 356.6 L1543.2 347 M1537.6 356.8 L1543.4 351 M1541 356.9 L1543.5 354.4" stroke="#8c8c8c" stroke-width="0.9" fill="none"/></svg>
<svg class="abs" style="left:868.83px;top:414.33px" width="17.75" height="17.75" viewBox="0 0 16 16" preserveAspectRatio="none" fill="#fff"><path fill-rule="evenodd" d="M10.354 6.146a.5.5 0 0 1 0 .708l-3 3a.5.5 0 0 1-.708 0l-1.5-1.5a.5.5 0 1 1 .708-.708L7 8.793l2.646-2.647a.5.5 0 0 1 .708 0"/><path d="M4.406 3.342A5.53 5.53 0 0 1 8 2c2.69 0 4.923 2 5.166 4.579C14.758 6.804 16 8.137 16 9.773 16 11.569 14.502 13 12.687 13H3.781C1.708 13 0 11.366 0 9.318c0-1.763 1.266-3.223 2.942-3.593.143-.863.698-1.723 1.464-2.383m.653.757c-.757.653-1.153 1.44-1.153 2.056v.448l-.445.049C2.064 6.805 1 7.952 1 9.318 1 10.785 2.23 12 3.781 12h8.906C13.98 12 15 10.988 15 9.773c0-1.216-1.02-2.228-2.313-2.228h-.5v-.5C12.188 4.825 10.328 3 8 3a4.53 4.53 0 0 0-2.941 1.1z"/></svg>
<div class="t" style="left:891.40px;top:416px;font-size:17.6px;line-height:20px;color:#fff;letter-spacing:-0.04px;">Hello! How can I assist you today?</div>
<svg class="abs" style="left:1519.0px;top:413.8px" width="17.5" height="17.30000000000001" viewBox="-1 -1 18.06 18.09" preserveAspectRatio="none"><g fill="none" stroke="#a3c8f7" stroke-width="1.15" stroke-linejoin="round"><rect x="3.6" y="3.6" width="11.8" height="11.8" rx="2.3"/><path d="M3.6 12.2 H2.6 a2.1 2.1 0 0 1 -2.1 -2.1 V2.6 a2.1 2.1 0 0 1 2.1 -2.1 H9.8 a2.1 2.1 0 0 1 2.1 2.1 V3.6"/></g></svg>
<svg class="abs" style="left:978.50px;top:461.70px" width="14.40" height="14.40" viewBox="0 0 16 16" preserveAspectRatio="none" fill="#fff"><path d="M11 6a3 3 0 1 1-6 0 3 3 0 0 1 6 0"/><path fill-rule="evenodd" d="M0 8a8 8 0 1 1 16 0A8 8 0 0 1 0 8m8-7a7 7 0 0 0-5.468 11.370C3.242 11.226 4.805 10 8 10s4.757 1.225 5.468 2.370A7 7 0 0 0 8 1"/></svg>
<div class="t" style="left:1000.20px;top:462px;font-size:17.6px;line-height:20px;color:#fff;">Hi</div>
<div class="abs" id="ftr"></div>
<svg class="abs" style="left:3.83px;top:803.93px" width="17.73" height="17.73" viewBox="0 0 16 16" preserveAspectRatio="none" fill="#dadada"><path d="M8 8a3 3 0 1 0 0-6 3 3 0 0 0 0 6m2-3a2 2 0 1 1-4 0 2 2 0 0 1 4 0m4 8c0 1-1 1-1 1H3s-1 0-1-1 1-4 6-4 6 3 6 4m-1-.004c-.001-.246-.154-.986-.832-1.664C11.516 10.680 10.289 10 8 10s-3.516.680-4.168 1.332c-.678.678-.830 1.418-.832 1.664z"/></svg>
<div class="t" style="left:20.40px;top:806px;font-size:15.4px;line-height:18px;color:#fff;letter-spacing:-0.08px;">administrator</div>
<div class="t" style="left:741.80px;top:806px;font-size:13.2px;line-height:15px;color:#fff;">Copyright 2025</div>
<div class="t" style="left:1082.80px;top:806px;font-size:13.2px;line-height:15px;color:#fff;letter-spacing:-0.045px;">Sun Jul 20 2025 21:48:44 GMT+0300 (Eastern European Summer Time)</div>
<div class="abs" style="left:1571px;top:789px;width:7px;height:8px;background:#fff"></div>
</div></div>
</body>
</html>
